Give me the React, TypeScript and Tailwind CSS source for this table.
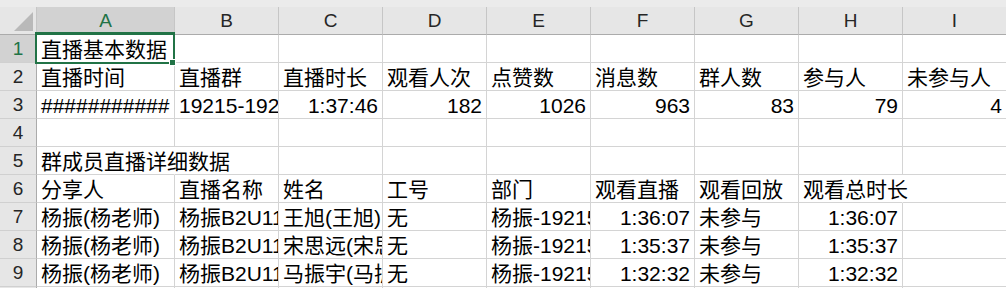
import React from 'react'

type Cell = {
  v?: string
  right?: boolean
  spill?: boolean
}

const cols = ['A', 'B', 'C', 'D', 'E', 'F', 'G', 'H', 'I']

const rows: Cell[][] = [
  [{ v: '直播基本数据' }],
  [
    { v: '直播时间' },
    { v: '直播群' },
    { v: '直播时长' },
    { v: '观看人次' },
    { v: '点赞数' },
    { v: '消息数' },
    { v: '群人数' },
    { v: '参与人' },
    { v: '未参与人' },
  ],
  [
    { v: '###########' },
    { v: '19215-19215' },
    { v: '1:37:46', right: true },
    { v: '182', right: true },
    { v: '1026', right: true },
    { v: '963', right: true },
    { v: '83', right: true },
    { v: '79', right: true },
    { v: '4', right: true },
  ],
  [],
  [{ v: '群成员直播详细数据', spill: true }],
  [
    { v: '分享人' },
    { v: '直播名称' },
    { v: '姓名' },
    { v: '工号' },
    { v: '部门' },
    { v: '观看直播' },
    { v: '观看回放' },
    { v: '观看总时长', spill: true },
  ],
  [
    { v: '杨振(杨老师)' },
    { v: '杨振B2U11直播' },
    { v: '王旭(王旭)' },
    { v: '无' },
    { v: '杨振-19215' },
    { v: '1:36:07', right: true },
    { v: '未参与' },
    { v: '1:36:07', right: true },
  ],
  [
    { v: '杨振(杨老师)' },
    { v: '杨振B2U11直播' },
    { v: '宋思远(宋思远)' },
    { v: '无' },
    { v: '杨振-19215' },
    { v: '1:35:37', right: true },
    { v: '未参与' },
    { v: '1:35:37', right: true },
  ],
  [
    { v: '杨振(杨老师)' },
    { v: '杨振B2U11直播' },
    { v: '马振宇(马振宇)' },
    { v: '无' },
    { v: '杨振-19215' },
    { v: '1:32:32', right: true },
    { v: '未参与' },
    { v: '1:32:32', right: true },
  ],
  [],
]

function DataCell({ cell }: { cell?: Cell }) {
  if (!cell || !cell.v) {
    return <div className="h-[28px] border-r border-b border-[#d4d4d4]" />
  }
  if (cell.spill) {
    // text runs over the empty neighbour, so no gridline on the right
    return (
      <div className="relative z-10 h-[28px] border-b border-r border-b-[#d4d4d4] border-r-transparent overflow-visible whitespace-nowrap pl-[4px] pt-[3px] leading-[24px]">
        {cell.v}
      </div>
    )
  }
  return (
    <div
      className={
        'h-[28px] border-r border-b border-[#d4d4d4] overflow-hidden whitespace-nowrap px-[4px] pt-[3px] leading-[24px] ' +
        (cell.right ? 'text-right' : 'text-left')
      }
    >
      {cell.v}
    </div>
  )
}

export default function App() {
  return (
    <div
      className="relative h-[288px] w-[1006px] overflow-hidden bg-white text-[21px] text-black"
      style={{ fontFamily: '"Liberation Sans", "Noto Sans CJK SC", sans-serif' }}
    >
      <div className="h-[7px] bg-[#ebebeb]" />
      <div className="grid grid-cols-[37px_138px_104px_104px_104px_104px_104px_104px_104px_104px]">
        {/* corner */}
        <div className="relative h-[28px] border-r border-b border-r-[#c6c6c6] border-b-[#ababab] bg-[#e6e6e6]">
          <svg className="absolute left-[14px] top-[5px]" width="20" height="19" viewBox="0 0 20 19">
            <polygon points="0,19 19,0 19,19" fill="#b9b9b9" />
          </svg>
        </div>
        {cols.map((c) => (
          <div
            key={c}
            className={
              'flex h-[28px] items-center justify-center border-r border-b border-r-[#c6c6c6] pt-[2px] text-[19px] ' +
              (c === 'A'
                ? 'border-b-[#217346] bg-[#d2d2d2] text-[#217346]'
                : 'border-b-[#ababab] bg-[#e6e6e6] text-[#262626]')
            }
          >
            {c}
          </div>
        ))}

        {rows.map((row, i) => (
          <React.Fragment key={i}>
            <div
              className={
                'flex h-[28px] items-center justify-center border-r border-b border-r-[#ababab] border-b-[#d0d0d0] pt-[2px] text-[19px] ' +
                (i === 0 ? 'bg-[#d2d2d2] text-[#217346]' : 'bg-[#e6e6e6] text-[#262626]')
              }
            >
              {i + 1}
            </div>
            {cols.map((c, j) => (
              <DataCell key={c} cell={row[j]} />
            ))}
          </React.Fragment>
        ))}
      </div>

      {/* active cell A1 */}
      <div className="absolute left-[35px] top-[32px] z-20 h-[32px] w-[140px] border-2 border-[#217346]" />
      <div className="absolute left-[169px] top-[59px] z-30 h-[7px] w-[7px] border border-white bg-[#217346]" />
    </div>
  )
}
